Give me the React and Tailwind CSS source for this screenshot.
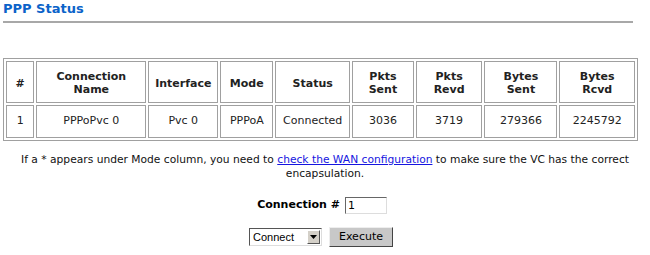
const HEAD = [
  ['#', 'w-[30px]'],
  ['Connection\nName', 'w-[114px]'],
  ['Interface', 'w-[71px]'],
  ['Mode', 'w-[55px]'],
  ['Status', 'w-[76px]'],
  ['Pkts\nSent', 'w-[65px]'],
  ['Pkts\nRevd', 'w-[70px]'],
  ['Bytes\nSent', 'w-[76px]'],
  ['Bytes\nRcvd', 'w-[78px]'],
]
const ROW = ['1', 'PPPoPvc 0', 'Pvc 0', 'PPPoA', 'Connected', '3036', '3719', '279366', '2245792']

export default function App() {
  return (
    <div className="w-[650px] h-[255px] bg-white text-black font-['DejaVu_Sans',sans-serif] text-[11px] overflow-hidden">
      <div className="px-[3px] pt-[1px]">
        <h1 className="text-[#0b63c9] font-bold text-[13px] leading-[16px]">PPP Status</h1>
        <div className="mt-[4px] w-[630px] h-[2px] bg-[#a8a8a8]" />
      </div>

      <table className="ml-[3px] mt-[35px] w-[635px] border-separate border-spacing-[2px] border border-[#a0a0a0] text-[11px]">
        <thead>
          <tr className="h-[42px]">
            {HEAD.map(([h, w]) => (
              <th key={h} className={`${w} border border-[#a0a0a0] font-bold text-[#222] leading-[13px] whitespace-pre-line pt-[2px]`}>{h}</th>
            ))}
          </tr>
        </thead>
        <tbody>
          <tr className="h-[33px]">
            {ROW.map((c, i) => (
              <td key={i} className="border border-[#a0a0a0] text-center text-[#222]">{c}</td>
            ))}
          </tr>
        </tbody>
      </table>

      <p className="mt-[12px] px-[10px] text-center text-[10.7px] leading-[14px] text-[#111]">
        If a * appears under Mode column, you need to <a className="text-[#1515e0] underline">check the WAN configuration</a> to make sure the VC has the correct encapsulation.
      </p>

      <div className="mt-[16px] flex items-center justify-center gap-[5px] pr-[6px]">
        <span className="font-bold text-[11px]">Connection #</span>
        <input defaultValue="1" className="w-[42px] h-[17px] border border-t-[#666] border-l-[#666] border-b-[#ddd] border-r-[#ddd] px-[2px] text-[11px] leading-[15px]" />
      </div>

      <div className="mt-[13px] flex items-center justify-center gap-[7px] pr-[8px]">
        <div className="flex w-[73px] h-[18px] border border-t-[#555] border-l-[#555] border-b-[#ddd] border-r-[#ddd] items-center">
          <span className="flex-1 px-[3px] text-[11px] font-['Liberation_Sans',sans-serif]">Connect</span>
          <span className="w-[13px] h-[14px] mr-[1px] bg-[#d4d0c8] border border-t-white border-l-white border-b-[#555] border-r-[#555] flex items-center justify-center">
            <svg width="7" height="4" viewBox="0 0 7 4"><path d="M0 0h7L3.5 4z" fill="#000" /></svg>
          </span>
        </div>
        <button className="w-[64px] h-[20px] bg-[#c8c8c8] border border-t-[#eee] border-l-[#eee] border-b-[#444] border-r-[#444] text-[11px] leading-[16px]">Execute</button>
      </div>
    </div>
  )
}
